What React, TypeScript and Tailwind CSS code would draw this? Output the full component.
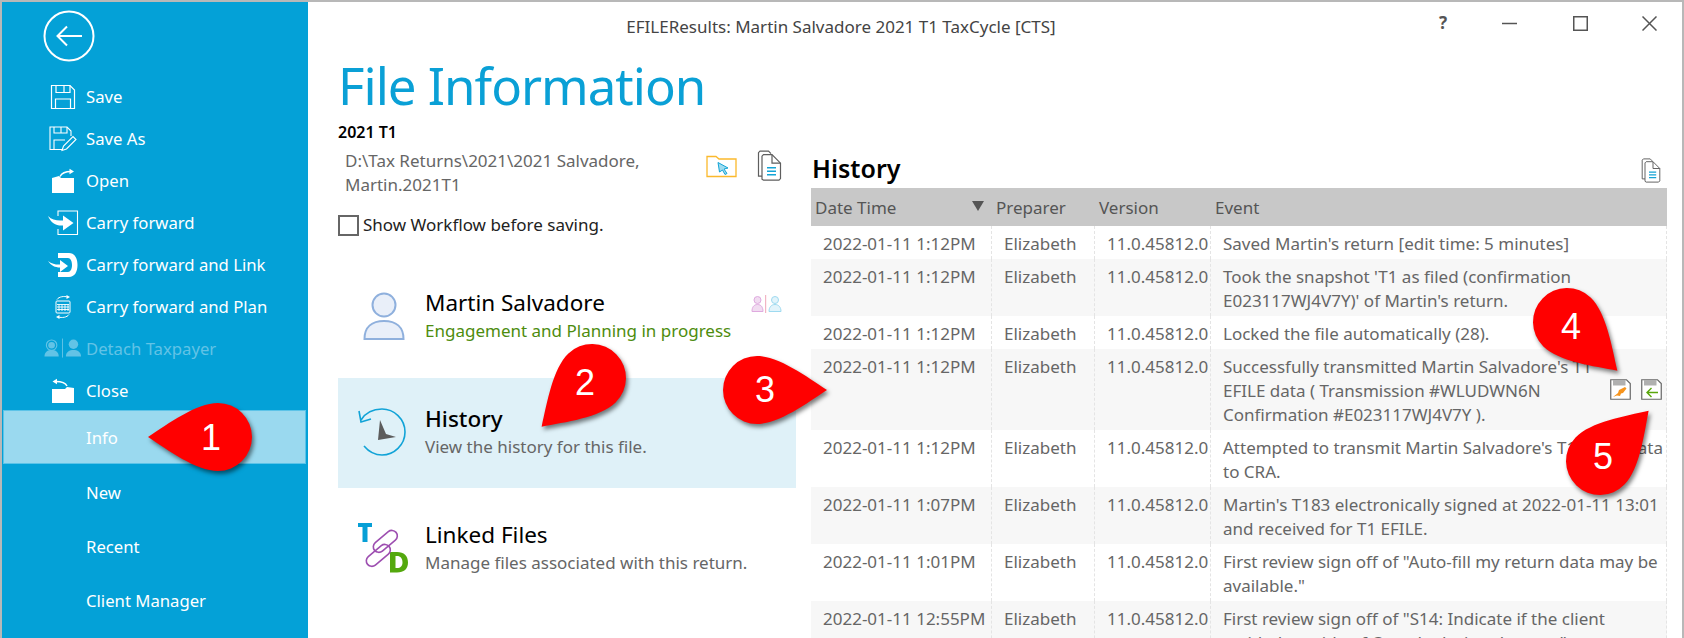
import type { ReactNode } from "react";

const FONT = "font-['Noto_Sans','Open_Sans',sans-serif]";

function BackIcon() {
  return (
    <svg width="52" height="52" viewBox="0 0 52 52" fill="none" stroke="white" strokeWidth="2">
      <circle cx="26" cy="26" r="24.5" />
      <path d="M39 26H15M24 16.5L14.5 26L24 35.5" />
    </svg>
  );
}

function SaveIcon() {
  return (
    <svg width="26" height="26" viewBox="0 0 26 26" fill="none" stroke="white" strokeWidth="1.2">
      <path d="M1.5 1.5H20L24.5 6V24.5H1.5Z" />
      <path d="M6 1.5V8.5H20V1.5M14 1.5V8.5M5.5 24.5V15H20.5V24.5M5.5 15" />
    </svg>
  );
}

function SaveAsIcon() {
  return (
    <svg width="28" height="26" viewBox="0 0 28 26" fill="none" stroke="white" strokeWidth="1.1">
      <path d="M13 23.5H1V1H18L22 5V10" />
      <path d="M5 1V7H18V1M12 1V7M5 23V14H16" />
      <path d="M13 24.5L14.5 20L24 10.5L27 13.5L17.5 23Z" />
    </svg>
  );
}

function OpenIcon() {
  return (
    <svg width="24" height="26" viewBox="0 0 24 26" fill="white">
      <path d="M1 10L8 8L10 10H23V25H1Z" />
      <path d="M9 8.5C11 4.5 15 3.5 20 3.5" fill="none" stroke="white" strokeWidth="1.5" />
      <path d="M18.5 0.8L23 3.5L18.5 6.2Z" />
    </svg>
  );
}

function CloseIcon() {
  return (
    <svg width="24" height="26" viewBox="0 0 24 26" fill="white">
      <path d="M1 11H14L16 9L23 10V25H1Z" />
      <path d="M16 8C14 4 10 3.5 5 3.5" fill="none" stroke="white" strokeWidth="1.5" />
      <path d="M6 0.8L1.5 3.5L6 6.2Z" />
    </svg>
  );
}

function CarryIcon() {
  return (
    <svg width="32" height="26" viewBox="0 0 32 26" fill="white">
      <path d="M11 6V1H30.5V24.5H11V19" fill="none" stroke="white" strokeWidth="1.1" />
      <path d="M1 6C5 10 10 11 16 10.5V5.5L26.5 13L16 20.5V15.5C9 16 4 13 1 6Z" />
    </svg>
  );
}

function LinkIcon() {
  return (
    <svg width="32" height="26" viewBox="0 0 32 26" fill="white">
      <path d="M11 1H22C27.5 1 30.5 6 30.5 13C30.5 20 27.5 25 22 25H11V20H21C23.5 20 25 17 25 13C25 9 23.5 6 21 6H11Z" />
      <path d="M1 9C5 12 10 13 13 12.5V8L21 14L13 20V15.5C8 15.5 4 13.5 1 9Z" />
    </svg>
  );
}

function PlanIcon() {
  return (
    <svg width="18" height="26" viewBox="0 0 18 26" fill="none" stroke="white">
      <path d="M3 5.5C5 2.5 10 2 14 3" strokeWidth="1" />
      <path d="M12.5 1L16 3L12.5 5Z" fill="white" stroke="none" />
      <rect x="2" y="7" width="14" height="12" rx="1" strokeWidth="1" />
      <path d="M5 10.5V17M8 10.5V17M11 10.5V17M14 10.5V17M3 10.5H15M3 13H15M3 15.5H15" strokeWidth="0.9" />
      <path d="M15 20.5C13 23.5 8 24 4 23" strokeWidth="1" />
      <path d="M5.5 21L2 23L5.5 25Z" fill="white" stroke="none" />
    </svg>
  );
}

function DetachIcon() {
  return (
    <svg width="38" height="22" viewBox="0 0 40 22" fill="#62c3e6">
      <circle cx="8" cy="7" r="5.5" fill="none" stroke="#62c3e6" strokeWidth="1.2" />
      <circle cx="8" cy="7" r="3.5" />
      <path d="M0.5 19C0.5 14 4 12 8 12C12 12 15.5 14 15.5 19Z" />
      <rect x="19" y="0" width="1" height="20" />
      <circle cx="31" cy="6" r="5" />
      <path d="M23 19C23 14 27 12 31 12C35 12 39 14 39 19Z" />
    </svg>
  );
}

function FolderPickIcon() {
  return (
    <svg width="31" height="23" viewBox="0 0 31 23" fill="none">
      <path d="M1 21.5V1.5H10L13 4H30V21.5Z" stroke="#fbb92c" strokeWidth="1.3" />
      <path d="M12 7.5L22 13L18 14L21 18.5L19 19.5L16.5 15L13.5 17Z" fill="#9fdcf0" stroke="#13a4d6" strokeWidth="1" />
    </svg>
  );
}

function DocsIcon({ size = 25 }: { size?: number }) {
  return (
    <svg width={size} height={size * 1.25} viewBox="0 0 25 31" fill="none" stroke="#5e5e5e" strokeWidth="1.2">
      <path d="M5 26H1.5V2.5L3 1H11.5L14 3.5" />
      <path d="M5 29V6L6.5 4.5H15L23.5 13V28.5L22 30H6.5Z" fill="white" />
      <path d="M15 4.5V13H23.5" />
      <path d="M10 17.5H19M10 21H19M10 24.5H19" stroke="#13a4d6" strokeWidth="1.5" />
    </svg>
  );
}

function PersonIcon() {
  return (
    <svg width="42" height="48" viewBox="0 0 42 48" fill="#e9eff9" stroke="#8fb0dd" strokeWidth="2">
      <circle cx="21" cy="13" r="11.5" />
      <path d="M1.5 47C1.5 35 9 29 21 29C33 29 40.5 35 40.5 47Z" />
    </svg>
  );
}

function SmallPeopleIcon() {
  return (
    <svg width="31" height="18" viewBox="0 0 31 18" fill="none">
      <circle cx="6.5" cy="5" r="3.5" fill="#f1dcf1" stroke="#dfaadf" />
      <path d="M1 16.5C1 12 3 9.5 6.5 9.5C10 9.5 12 12 12 16.5Z" fill="#f1dcf1" stroke="#dfaadf" />
      <rect x="14" y="0" width="1.2" height="18" fill="#f2b5c4" />
      <circle cx="24" cy="5" r="3.5" fill="#e2f4fb" stroke="#9edaf0" />
      <path d="M18 16.5C18 12 20.5 9.5 24 9.5C27.5 9.5 30 12 30 16.5Z" fill="#e2f4fb" stroke="#9edaf0" />
    </svg>
  );
}

function HistoryIcon() {
  return (
    <svg width="50" height="48" viewBox="0 0 50 48" fill="none">
      <path d="M3 12C8 4 15 1 24 1C36 1 47 11 47 24C47 37 36 47 24 47C17 47 11 44 6 38" stroke="#11a3d7" strokeWidth="1.6" />
      <path d="M1 3L3 14L13 11" stroke="#11a3d7" strokeWidth="1.6" />
      <path d="M22 12L28 26L38 29L20 32Z" fill="#5c5c5c" />
    </svg>
  );
}

function LinkedIcon() {
  return (
    <svg width="50" height="50" viewBox="0 0 50 50" fill="none">
      <path d="M0 0H14V4H9.5V19H4.5V4H0Z" fill="#069fd6" />
      <path d="M32 29H39C46 29 50 33 50 39.5C50 46 46 49.5 39 49.5H32ZM37.5 33V45H39C42.5 45 44.5 43 44.5 39.5C44.5 35.5 42.5 33 39 33Z" fill="#54a80e" />
      <g stroke="#9d4eb0" strokeWidth="1.6">
        <rect x="13" y="13" width="28" height="11" rx="5.5" transform="rotate(-40 27 18)" />
        <rect x="6" y="27" width="28" height="11" rx="5.5" transform="rotate(-40 20 32)" />
      </g>
    </svg>
  );
}

function RowSaveIcon({ children }: { children: ReactNode }) {
  return (
    <svg width="21" height="21" viewBox="0 0 21 21" fill="none">
      <path d="M0.75 0.75H16.5L20.25 4.5V20.25H0.75Z" fill="white" stroke="#666" strokeWidth="1.2" />
      <path d="M3 1H15.5V6.5H3Z" fill="#b0b0b0" />
      {children}
    </svg>
  );
}

const TOP_ITEMS = [
  { label: "Save", icon: <SaveIcon /> },
  { label: "Save As", icon: <SaveAsIcon /> },
  { label: "Open", icon: <OpenIcon /> },
  { label: "Carry forward", icon: <CarryIcon /> },
  { label: "Carry forward and Link", icon: <LinkIcon /> },
  { label: "Carry forward and Plan", icon: <PlanIcon /> },
  { label: "Detach Taxpayer", icon: <DetachIcon />, disabled: true },
  { label: "Close", icon: <CloseIcon /> },
];

const ROWS = [
  { date: "2022-01-11 1:12PM", event: "Saved Martin's return [edit time: 5 minutes]" },
  { date: "2022-01-11 1:12PM", event: "Took the snapshot 'T1 as filed (confirmation\nE023117WJ4V7Y)' of Martin's return." },
  { date: "2022-01-11 1:12PM", event: "Locked the file automatically (28)." },
  { date: "2022-01-11 1:12PM", event: "Successfully transmitted Martin Salvadore's T1\nEFILE data  ( Transmission #WLUDWN6N\nConfirmation #E023117WJ4V7Y ).", icons: true },
  { date: "2022-01-11 1:12PM", event: "Attempted to transmit Martin Salvadore's T1 EFILE data\nto CRA." },
  { date: "2022-01-11 1:07PM", event: "Martin's T183 electronically signed at 2022-01-11 13:01\nand received for T1 EFILE." },
  { date: "2022-01-11 1:01PM", event: "First review sign off of \"Auto-fill my return data may be\navailable.\"" },
  { date: "2022-01-11 12:55PM", event: "First review sign off of \"S14: Indicate if the client\nresided outside of Canada during the year\"" },
];

function Callout({ n, angle, box, num }: { n: string; angle: number; box: string; num: string }) {
  return (
    <div className={`absolute h-[160px] w-[160px] ${box}`}>
      <svg width="160" height="160" viewBox="-80 -80 160 160" className="drop-shadow-[2px_3px_2px_rgba(0,0,0,0.5)]">
        <path
          transform={`rotate(${angle})`}
          d="M70 0C50 -13 22 -34 0 -34A34 34 0 0 0 0 34C22 34 50 13 70 0Z"
          fill="#ff0000"
        />
      </svg>
      <span className={`absolute inset-0 flex items-center justify-center font-['Liberation_Sans',sans-serif] text-[36px] text-white ${num}`}>
        {n}
      </span>
    </div>
  );
}

export default function App() {
  return (
    <div className={`relative flex h-[638px] w-[1684px] overflow-hidden border-t-2 border-r-2 border-l-2 border-[#b8b8b8] bg-white ${FONT}`}>
      <aside className="flex w-[306px] shrink-0 flex-col bg-[#04a1d7] text-[16.7px] text-white">
        <div className="pt-[8px] pl-[41px]">
          <BackIcon />
        </div>
        <nav className="mt-[14px] flex flex-col">
          {TOP_ITEMS.map(item => (
            <div key={item.label} className={`flex h-[42px] items-center pl-[38px] ${item.disabled ? "text-[#62c3e6]" : ""}`}>
              <span className="flex w-[46px] shrink-0 justify-center">{item.icon}</span>
              <span>{item.label}</span>
            </div>
          ))}
        </nav>
        <div className="mt-[-2px] mr-[2px] ml-px flex h-[54px] items-center border border-[#5cc3e8] bg-[#9ad9ef] pt-[2px] pl-[82px]">Info</div>
        <div className="flex h-[54px] items-center pt-[4px] pl-[84px]">New</div>
        <div className="flex h-[54px] items-center pt-[4px] pl-[84px]">Recent</div>
        <div className="flex h-[54px] items-center pt-[4px] pl-[84px]">Client Manager</div>
      </aside>

      <main className="min-w-0 flex-1">
        <header className="flex h-[50px] items-center">
          <div className="w-[1066px] text-center text-[17px] text-[#444]">EFILEResults: Martin Salvadore 2021 T1 TaxCycle [CTS]</div>
          <div className="mb-[8px] flex items-center">
            <span className="ml-[65px] w-[15px] text-[17px] font-bold text-[#555]">?</span>
            <svg className="ml-[48px]" width="15" height="15" viewBox="0 0 15 15" stroke="#555" strokeWidth="1.5" fill="none"><path d="M0 7.5H15" /></svg>
            <svg className="ml-[56px]" width="15" height="15" viewBox="0 0 15 15" stroke="#555" strokeWidth="1.5" fill="none"><rect x="0.75" y="0.75" width="13.5" height="13.5" /></svg>
            <svg className="ml-[54px]" width="15" height="15" viewBox="0 0 15 15" stroke="#555" strokeWidth="1.5" fill="none"><path d="M0.5 0.5L14.5 14.5M14.5 0.5L0.5 14.5" /></svg>
          </div>
        </header>

        <h1 className="ml-[30px] text-[51px] leading-[66px] font-normal tracking-[-1px] text-[#0aa0d6]">File Information</h1>

        <div className="flex">
          <section className="ml-[30px] w-[458px] shrink-0 pt-[4px]">
            <div className="text-[16px] leading-[20px] font-semibold text-black">2021 T1</div>
            <div className="mt-[7px] flex items-start">
              <p className="ml-[7px] w-[320px] text-[17px] leading-[24px] text-[#666]">
                D:\Tax Returns\2021\2021 Salvadore, Martin.2021T1
              </p>
              <span className="mt-[6px] ml-[41px]"><FolderPickIcon /></span>
              <span className="mt-[1px] ml-[20px]"><DocsIcon /></span>
            </div>
            <label className="mt-[17px] flex items-center text-[17px] leading-[22px] text-[#222]">
              <span className="h-[21px] w-[21px] border-2 border-[#666] bg-white" />
              <span className="ml-[4px]">Show Workflow before saving.</span>
            </label>

            <div className="mt-[32px] flex h-[110px] pt-[19px] pl-[25px]">
              <span className="mt-[5px] w-[62px] shrink-0"><PersonIcon /></span>
              <div>
                <div className="text-[22.5px] leading-[32px] text-black">Martin Salvadore</div>
                <div className="text-[17px] leading-[24px] text-[#4d8c0e]">Engagement and Planning in progress</div>
              </div>
              <span className="mt-[8px] mr-[14px] ml-auto"><SmallPeopleIcon /></span>
            </div>
            <div className="flex h-[110px] bg-[#dff1f8] pt-[25px] pl-[20px]">
              <span className="mt-[5px] w-[67px] shrink-0"><HistoryIcon /></span>
              <div>
                <div className="text-[22.5px] leading-[32px] font-medium text-black">History</div>
                <div className="text-[17px] leading-[24px] text-[#666]">View the history for this file.</div>
              </div>
            </div>
            <div className="flex h-[110px] pt-[31px] pl-[20px]">
              <span className="mt-[4px] w-[67px] shrink-0"><LinkedIcon /></span>
              <div>
                <div className="text-[22.5px] leading-[32px] text-black">Linked Files</div>
                <div className="text-[17px] leading-[24px] text-[#666]">Manage files associated with this return.</div>
              </div>
            </div>
          </section>

          <section className="ml-[15px] w-[856px] shrink-0 pt-[34px]">
            <div className="flex h-[36px] items-start justify-between pr-[6px]">
              <h2 className="ml-px text-[25px] leading-[32px] font-semibold text-black">History</h2>
              <span className="mt-[6px]"><DocsIcon size={20} /></span>
            </div>
            <div className="grid h-[38px] grid-cols-[181px_103px_116px_1fr] items-center bg-[#c8c8c8] pt-[1px] text-[17px] text-[#555]">
              <div className="relative pl-[4px]">
                Date Time
                <span className="absolute top-[6px] right-[8px] h-0 w-0 border-x-[6px] border-t-[10px] border-x-transparent border-t-[#555]" />
              </div>
              <div className="pl-[4px]">Preparer</div>
              <div className="pl-[4px]">Version</div>
              <div className="pl-[4px]">Event</div>
            </div>
            {ROWS.map((row, i) => (
              <div
                key={i}
                className={`grid grid-cols-[181px_103px_116px_1fr] text-[17px] leading-[24px] text-[#666] ${i % 2 ? "bg-[#f7f7f7]" : "bg-white"}`}
              >
                <div className="border-r border-dashed border-[#e4e4e4] pt-[6px] pb-[3px] pl-[12px] whitespace-nowrap">{row.date}</div>
                <div className="border-r border-dashed border-[#e4e4e4] pt-[6px] pb-[3px] pl-[12px]">Elizabeth</div>
                <div className="border-r border-dashed border-[#e4e4e4] pt-[6px] pb-[3px] pl-[12px]">11.0.45812.0</div>
                <div className="flex items-center justify-between border-r border-dashed border-[#e4e4e4] pt-[6px] pb-[3px] pl-[12px]">
                  <span className="whitespace-pre-line">{row.event}</span>
                  {row.icons && (
                    <span className="mr-[4px] mb-[4px] flex gap-[10px]">
                      <RowSaveIcon>
                        <path d="M3 18L8 14L9 11L15 8L16.5 9.5L13 14L11 14.5L10 17L7 16.5Z" fill="#f7941d" />
                      </RowSaveIcon>
                      <RowSaveIcon>
                        <path d="M17 13.5H6M10.5 9L6 13.5L10.5 18" stroke="#5aa70c" strokeWidth="1.4" />
                      </RowSaveIcon>
                    </span>
                  )}
                </div>
              </div>
            ))}
          </section>
        </div>
      </main>

      <Callout n="1" angle={180} box="left-[136px] top-[355px]" num="translate-x-[-7px] translate-y-[1px]" />
      <Callout n="2" angle={136} box="left-[510px] top-[296px]" num="translate-x-[-7px] translate-y-[5px]" />
      <Callout n="3" angle={0} box="left-[675px] top-[308px]" num="translate-x-[8px]" />
      <Callout n="4" angle={44} box="left-[1485px] top-[240px]" num="translate-x-[4px] translate-y-[5px]" />
      <Callout n="5" angle={-46} box="left-[1518px] top-[379px]" num="translate-x-[3px] translate-y-[-4px]" />
    </div>
  );
}
